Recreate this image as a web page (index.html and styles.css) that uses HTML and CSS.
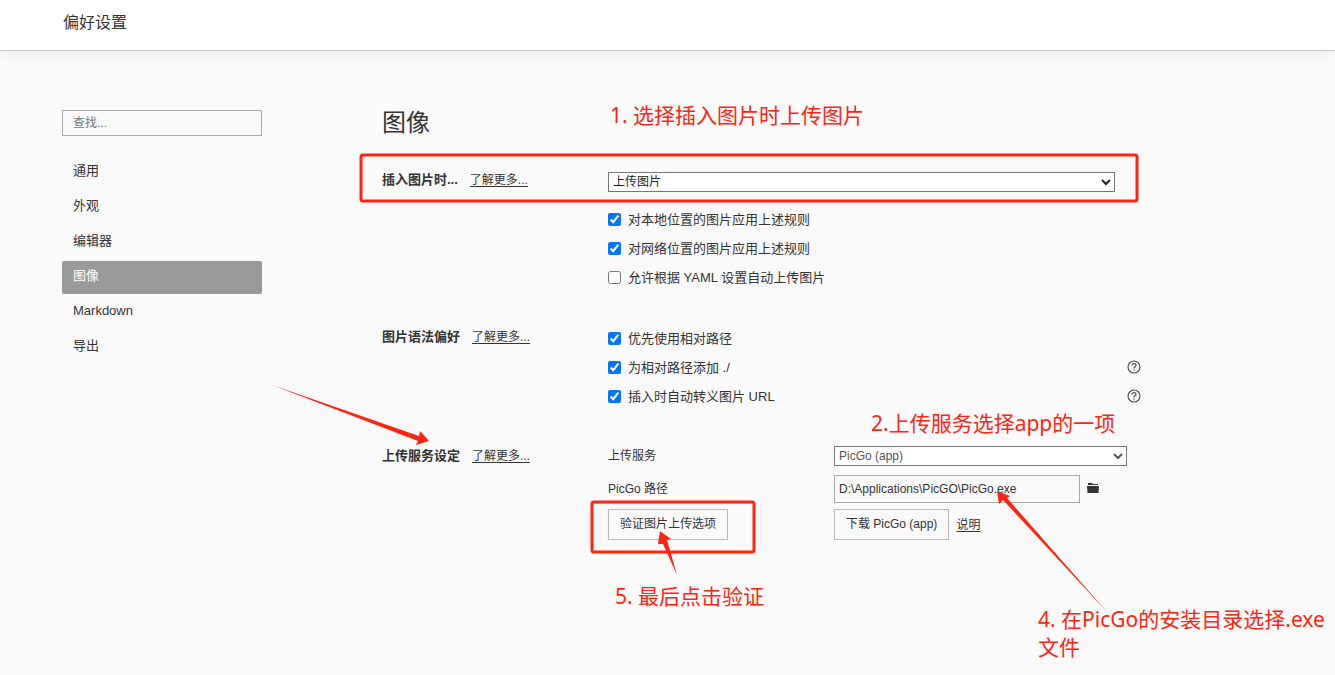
FILE: index.html
```html
<!DOCTYPE html>
<html lang="zh-CN">
<head>
<meta charset="utf-8">
<meta name="viewport" content="width=device-width, initial-scale=1">
<title>偏好设置</title>
<link rel="stylesheet" href="styles.css">
</head>
<body>
<header class="topbar">偏好设置</header>
<div class="layout">
  <aside class="sidebar">
    <input class="search" type="text" placeholder="查找..." aria-label="查找">
    <nav class="menu">
      <a class="menu-item" href="#general">通用</a>
      <a class="menu-item" href="#appearance">外观</a>
      <a class="menu-item" href="#editor">编辑器</a>
      <a class="menu-item active" href="#image">图像</a>
      <a class="menu-item" href="#markdown">Markdown</a>
      <a class="menu-item" href="#export">导出</a>
    </nav>
  </aside>
  <main class="content">
    <h1 class="title">图像</h1>

    <section class="group">
      <div class="group-label"><label class="name" for="insert">插入图片时...</label><a class="more" href="#more">了解更多...</a></div>
      <div class="controls">
        <div class="select-row"><select id="insert" class="select wide"><option>上传图片</option></select></div>
        <label class="check"><input type="checkbox" checked><span>对本地位置的图片应用上述规则</span></label>
        <label class="check"><input type="checkbox" checked><span>对网络位置的图片应用上述规则</span></label>
        <label class="check"><input type="checkbox"><span>允许根据 YAML 设置自动上传图片</span></label>
      </div>
    </section>

    <section class="group">
      <div class="group-label"><span class="name">图片语法偏好</span><a class="more" href="#more">了解更多...</a></div>
      <div class="controls">
        <label class="check"><input type="checkbox" checked><span>优先使用相对路径</span></label>
        <div class="check-row">
          <label class="check"><input type="checkbox" checked><span>为相对路径添加 ./</span></label>
          <button class="icon-button" aria-label="帮助"><svg class="help" viewBox="0 0 14 14"><circle cx="7" cy="7" r="6"/><path d="M5 5.6C5 4.3 5.8 3.7 7 3.7s2 .7 2 1.7c0 1.3-2 1.4-2 3"/><path d="M7 9.6v1.2"/></svg></button>
        </div>
        <div class="check-row">
          <label class="check"><input type="checkbox" checked><span>插入时自动转义图片 URL</span></label>
          <button class="icon-button" aria-label="帮助"><svg class="help" viewBox="0 0 14 14"><circle cx="7" cy="7" r="6"/><path d="M5 5.6C5 4.3 5.8 3.7 7 3.7s2 .7 2 1.7c0 1.3-2 1.4-2 3"/><path d="M7 9.6v1.2"/></svg></button>
        </div>
      </div>
    </section>

    <section class="group">
      <div class="group-label"><span class="name">上传服务设定</span><a class="more" href="#more">了解更多...</a></div>
      <div class="controls service">
        <div class="field"><label for="service">上传服务</label><select id="service" class="select muted"><option>PicGo (app)</option></select></div>
        <div class="field">
          <label for="path">PicGo 路径</label>
          <div class="inline">
            <input id="path" class="path" type="text" value="D:\Applications\PicGO\PicGo.exe">
            <button class="icon-button" aria-label="选择文件"><svg class="folder" viewBox="0 0 12 10"><path d="M1 0h4l1 1h5v1H1z"/><path d="M0 3h12l-.5 7H.5z"/></svg></button>
          </div>
        </div>
        <div class="field">
          <div><button class="button">验证图片上传选项</button></div>
          <div class="inline"><button class="button">下载 PicGo (app)</button><a class="more" href="#help">说明</a></div>
        </div>
      </div>
    </section>
  </main>
</div>

<div class="notes">
  <svg class="marks" width="1335" height="675" viewBox="0 0 1335 675" aria-hidden="true">
    <rect class="frame" x="361" y="155" width="776" height="46" rx="2"/>
    <rect class="frame" x="592" y="502" width="162" height="50" rx="2"/>
    <path class="arrow" d="M272 385L419 436L420 431L429 441L416 445L418 441Z"/>
    <path class="arrow" d="M677 575L663 544L658 544L660 531L671 539L667 540Z"/>
    <path class="arrow" d="M1107 612L1003 500L999 504L997 491L1010 496L1007 498Z"/>
  </svg>
  <p class="note note-insert">1. 选择插入图片时上传图片</p>
  <p class="note note-service">2.上传服务选择app的一项</p>
  <p class="note note-path">4. 在PicGo的安装目录选择.exe<br>文件</p>
  <p class="note note-verify">5. 最后点击验证</p>
</div>
</body>
</html>
```
FILE: styles.css
```css
* { box-sizing: border-box; }

body {
  position: relative;
  margin: 0;
  min-height: 100vh;
  background: #fafafa;
  color: #333;
  font: 13px/28px "Liberation Sans", "Noto Sans CJK SC", sans-serif;
}

input, select, button { font: inherit; color: inherit; }
a { color: inherit; }

.topbar {
  height: 51px;
  padding-left: 63px;
  background: #fff;
  border-bottom: 1px solid #ccc;
  box-shadow: 0 2px 16px rgba(0, 0, 0, 0.07);
  font-size: 16px;
  line-height: 46px;
}

.layout {
  display: flex;
  gap: 120px;
  padding: 59px 60px 0 62px;
}

.sidebar { flex: 0 0 200px; }

.search {
  display: block;
  width: 100%;
  height: 26px;
  padding: 0 10px;
  border: 1px solid #a9a9a9;
  background: transparent;
  font-size: 12px;
  line-height: 18px;
}
.search::placeholder { color: #777; }

.menu {
  display: flex;
  flex-direction: column;
  gap: 2px;
  margin-top: 20px;
}
.menu-item {
  height: 33px;
  padding-left: 11px;
  border-radius: 2px;
  line-height: 30px;
  text-decoration: none;
}
.menu-item.active { background: #999; color: #fff; }

.content { flex: 1; max-width: 759px; }

.title {
  margin: 0 0 31px;
  font-size: 24px;
  font-weight: 400;
  line-height: 26px;
}

.group {
  display: flex;
  margin-bottom: 32px;
}
.group-label {
  flex: 0 0 226px;
  display: flex;
  align-items: baseline;
  align-self: flex-start;
  gap: 12px;
  line-height: 26px;
}
.name { font-weight: 700; }
.more { font-size: 12px; text-underline-offset: 2px; }
.controls { flex: 1; }

.select-row {
  display: flex;
  align-items: center;
  height: 30px;
  margin-bottom: 8px;
}
.select {
  height: 20px;
  padding: 0;
  border: 1px solid #767676;
  border-radius: 0;
  background: #fff;
  color: #222;
  font-size: 12px;
  line-height: 18px;
}
.wide { width: 100%; margin-right: 26px; }
.muted { width: 293px; color: #555; }

.check {
  display: flex;
  align-items: center;
  gap: 7px;
  height: 29px;
}
.check input { width: 13px; height: 13px; margin: 0; }
.check-row {
  display: flex;
  align-items: center;
  justify-content: space-between;
}

.icon-button {
  display: flex;
  padding: 0 0 2px;
  border: 0;
  background: none;
}
.help {
  width: 14px;
  height: 14px;
  fill: none;
  stroke: #555;
  stroke-width: 1.2;
}
.folder { width: 12px; height: 10px; fill: #333; }

.service {
  display: flex;
  flex-direction: column;
  gap: 6px;
  font-size: 12px;
}
.field {
  display: grid;
  grid-template-columns: 226px 1fr;
  align-items: center;
}
.field:first-child { line-height: 26px; }
.inline { display: flex; align-items: center; gap: 7px; }
.path {
  width: 246px;
  height: 28px;
  padding: 0 4px;
  border: 1px solid #a9a9a9;
  background: transparent;
}
.button {
  display: block;
  height: 31px;
  padding: 0 11px;
  border: 1px solid #b9b9b9;
  background: transparent;
  line-height: 29px;
}

/* Annotations drawn over the page */
.notes {
  position: absolute;
  inset: 0;
  overflow: hidden;
  pointer-events: none;
}
.marks { position: absolute; top: 0; left: 0; }
.frame { fill: none; stroke: #ff2412; stroke-width: 3; }
.arrow { fill: #ff2412; }
.note {
  position: absolute;
  margin: 0;
  color: #ff2412;
  font: 21px/28px "Noto Sans", "Noto Sans CJK SC", sans-serif;
  white-space: nowrap;
}
.note-insert { left: 610px; top: 101px; }
.note-service { left: 871px; top: 409px; }
.note-path { left: 1038px; top: 605px; }
.note-verify { left: 615px; top: 582px; }
```
